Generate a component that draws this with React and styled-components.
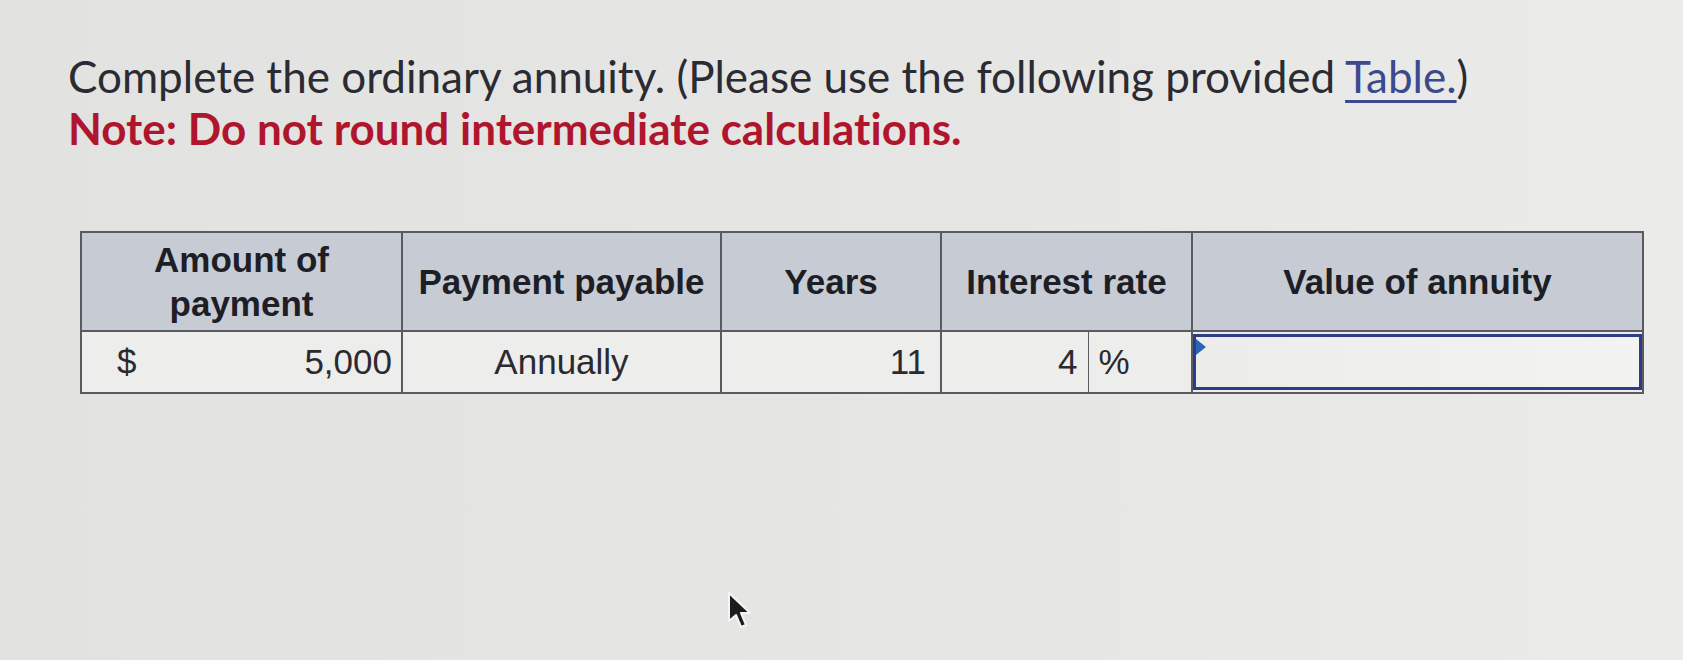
import React from "react";
import styled, { createGlobalStyle } from "styled-components";

const GlobalStyle = createGlobalStyle`
  html, body {
    margin: 0;
    padding: 0;
    background: #e4e4e2;
  }
  body {
    font-family: "Liberation Sans", Arial, sans-serif;
    color: #2a2a30;
  }
`;

const Page = styled.div`
  position: relative;
  width: 1683px;
  height: 660px;
  box-sizing: border-box;
  padding: 50px 0 0 68px;
  background: linear-gradient(90deg, #e2e2e0 0%, #e6e6e4 60%, #ebebea 100%);
  overflow: hidden;
`;

const Prompt = styled.p`
  margin: 0;
  font-family: Lato, "Liberation Sans", sans-serif;
  font-size: 44px;
  line-height: 52px;
  font-variant-ligatures: none;
  color: #2b2b33;
`;

const TableLink = styled.span`
  color: #3b4a8f;
  text-decoration: underline;
  text-underline-offset: 7px;
  text-decoration-thickness: 3px;
`;

const Note = styled(Prompt)`
  font-weight: 700;
  color: #b0152e;
`;

const Grid = styled.table`
  margin: 77px 0 0 12px;
  border-collapse: collapse;
  table-layout: fixed;
  width: 1562px;
`;

const Head = styled.th`
  height: 97px;
  padding: 0 8px;
  background: #c7ccd4;
  border: 2px solid #5a5a60;
  font-size: 35px;
  line-height: 44px;
  font-weight: 700;
  color: #1e1e26;
  text-align: center;
  vertical-align: middle;
`;

const Cell = styled.td`
  height: 60px;
  padding: 0 ${(p) => p.$pad || 12}px;
  background: #ededeb;
  border: 2px solid #5a5a60;
  border-left-width: ${(p) => (p.$thin ? 1 : 2)}px;
  border-right-width: ${(p) => (p.$thinRight ? 1 : 2)}px;
  font-size: 35px;
  color: #2a2a30;
  text-align: ${(p) => p.$align || "right"};
  vertical-align: middle;
`;

const Split = styled.div`
  display: flex;
  justify-content: space-between;
  align-items: center;
`;

const InputCell = styled.td`
  height: 60px;
  padding: 0;
  border: 2px solid #5a5a60;
  background: #ededeb;
`;

const AnswerBox = styled.div`
  position: relative;
  height: 56px;
  box-sizing: border-box;
  border: 3px solid #2c3d86;
  background: linear-gradient(90deg, #ecedeb, #f3f3f2);
`;

const Marker = styled.span`
  position: absolute;
  left: 0;
  top: 2px;
  width: 0;
  height: 0;
  border-top: 8px solid transparent;
  border-bottom: 8px solid transparent;
  border-left: 10px solid #2a64b8;
`;

const Pointer = styled.svg`
  position: absolute;
  left: 726px;
  top: 591px;
`;

export default function App() {
  return (
    <>
      <GlobalStyle />
      <Page>
        <Prompt>
          Complete the ordinary annuity. (Please use the following provided{" "}
          <TableLink>Table.</TableLink>)
        </Prompt>
        <Note>Note: Do not round intermediate calculations.</Note>
        <Grid>
          <colgroup>
            <col style={{ width: 321 }} />
            <col style={{ width: 319 }} />
            <col style={{ width: 220 }} />
            <col style={{ width: 147 }} />
            <col style={{ width: 104 }} />
            <col style={{ width: 451 }} />
          </colgroup>
          <thead>
            <tr>
              <Head>
                Amount of
                <br />
                payment
              </Head>
              <Head>Payment payable</Head>
              <Head>Years</Head>
              <Head colSpan={2}>Interest rate</Head>
              <Head>Value of annuity</Head>
            </tr>
          </thead>
          <tbody>
            <tr>
              <Cell $pad={9}>
                <Split>
                  <span style={{ paddingLeft: 26 }}>$</span>
                  <span>5,000</span>
                </Split>
              </Cell>
              <Cell $align="center">Annually</Cell>
              <Cell $pad={14}>11</Cell>
              <Cell $pad={10} $thinRight>
                4
              </Cell>
              <Cell $align="left" $pad={10} $thin>
                %
              </Cell>
              <InputCell>
                <AnswerBox>
                  <Marker />
                </AnswerBox>
              </InputCell>
            </tr>
          </tbody>
        </Grid>
        <Pointer width="30" height="40" viewBox="0 0 30 40">
          <path
            d="M3 2 L3 30 L10 24 L15 36 L20 34 L15 22 L24 22 Z"
            fill="#1c1c1c"
            stroke="#f5f5f5"
            strokeWidth="2"
            strokeLinejoin="round"
          />
        </Pointer>
      </Page>
    </>
  );
}
